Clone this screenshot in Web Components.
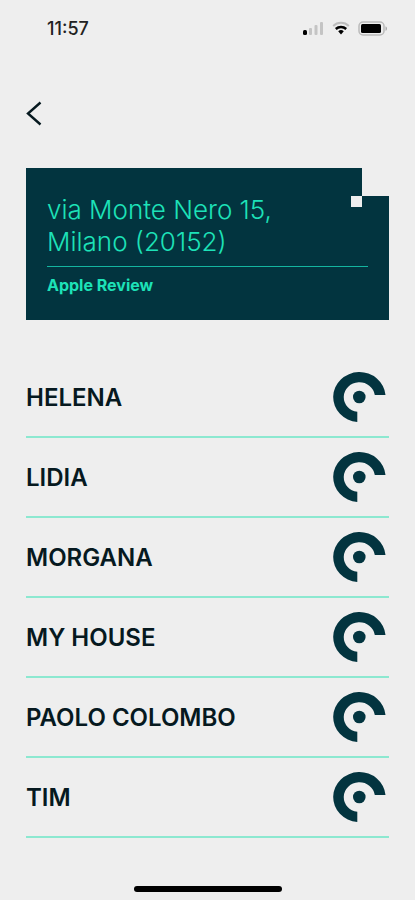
<!DOCTYPE html>
<html lang="it">
<head>
<meta charset="UTF-8">
<meta name="viewport" content="width=device-width, initial-scale=1">
<title>Apple Review</title>
<style>
    :root {
        --background: #eeeeee;
        --primary_color: #02343f;
        --secondary_color: #1de2b8;
        --line_color: #8ce8d0;
        --text_color: #06191f;
    }

    body {
        margin: 0;
        background-color: var(--background);
        color: var(--text_color);
        font-family: Inter, "Liberation Sans", sans-serif;
    }
</style>
</head>
<body>
<home-screen>
    <status-bar slot="status">11:57</status-bar>
    <back-button slot="nav"></back-button>
    <address-card slot="card">
        <span slot="address">via Monte Nero 15,<br>Milano (20152)</span>
        <span slot="owner">Apple Review</span>
    </address-card>
    <device-row>HELENA</device-row>
    <device-row>LIDIA</device-row>
    <device-row>MORGANA</device-row>
    <device-row>MY HOUSE</device-row>
    <device-row>PAOLO COLOMBO</device-row>
    <device-row>TIM</device-row>
</home-screen>

<script>
class HomeScreen extends HTMLElement {
    constructor() {
        super();
        this.shadow = this.attachShadow({ mode: 'open' });
    }

    connectedCallback() {
        this.shadow.innerHTML =
        /*html*/`
        <style>
            :host {
                display: flex;
                flex-direction: column;
                min-height: 100vh;
            }

            main {
                flex: 1;
                display: flex;
                flex-direction: column;
                padding: 40px 26px 0;
            }

            .list {
                margin-top: 38px;
            }

            .indicator {
                align-self: center;
                width: 148px;
                height: 6px;
                margin: 16px 0 8px;
                border-radius: 3px;
                background-color: #000;
            }
        </style>

        <slot name="status"></slot>
        <main>
            <slot name="nav"></slot>
            <slot name="card"></slot>
            <section class="list"><slot></slot></section>
        </main>
        <div class="indicator"></div>
        `;
    }
}
customElements.define('home-screen', HomeScreen);

class StatusBar extends HTMLElement {
    constructor() {
        super();
        this.shadow = this.attachShadow({ mode: 'open' });
    }

    connectedCallback() {
        this.shadow.innerHTML =
        /*html*/`
        <style>
            :host {
                display: flex;
                align-items: center;
                justify-content: space-between;
                height: 56px;
                padding: 0 27px 0 47px;
                color: #222;
                font-size: 18px;
                font-weight: 500;
            }

            .icons {
                display: flex;
                align-items: center;
                gap: 8px;
            }

            svg {
                display: block;
            }
        </style>

        <slot></slot>
        <div class="icons">
            <svg width="22" height="14" viewBox="0 0 22 14" aria-hidden="true">
                <rect x="1" y="9" width="4" height="5" rx="1.5" fill="#000"/>
                <rect x="7" y="7" width="3" height="7" rx="1" fill="#c4c4c4"/>
                <rect x="12.5" y="4" width="3" height="10" rx="1" fill="#c4c4c4"/>
                <rect x="18" y="1" width="3" height="13" rx="1" fill="#c4c4c4"/>
            </svg>
            <svg width="18" height="14" viewBox="0 0 18 14" fill="none" aria-hidden="true">
                <path d="M1.2 5a11.2 11.2 0 0 1 15.6 0" stroke="#bdbdbd" stroke-width="2"/>
                <path d="M3.8 8a7.6 7.6 0 0 1 10.4 0" stroke="#000" stroke-width="2.4"/>
                <path d="M6.2 10.3a4.2 4.2 0 0 1 5.6 0L9 13.4z" fill="#000"/>
            </svg>
            <svg width="30" height="15" viewBox="0 0 30 15" fill="none" aria-hidden="true">
                <rect x="1" y="1" width="25" height="13" rx="4" stroke="#bababa" stroke-width="1.5"/>
                <rect x="3" y="3" width="20" height="9" rx="1.5" fill="#000"/>
                <path d="M27.5 5.2c2 .8 2 3.8 0 4.6z" fill="#aaa"/>
            </svg>
        </div>
        `;
    }
}
customElements.define('status-bar', StatusBar);

class BackButton extends HTMLElement {
    constructor() {
        super();
        this.shadow = this.attachShadow({ mode: 'open' });
    }

    connectedCallback() {
        this.shadow.innerHTML =
        /*html*/`
        <style>
            :host {
                display: block;
            }

            button {
                display: block;
                padding: 4px 0;
                border: none;
                background: none;
                color: inherit;
                cursor: pointer;
            }

            svg {
                display: block;
            }
        </style>

        <button type="button" aria-label="Indietro">
            <svg width="16" height="26" viewBox="0 0 16 26" fill="none" stroke="currentColor" stroke-width="2.4">
                <path d="M14.5 2.5L2 13.5L14.5 24.500"/>
            </svg>
        </button>
        `;
    }
}
customElements.define('back-button', BackButton);

class AddressCard extends HTMLElement {
    constructor() {
        super();
        this.shadow = this.attachShadow({ mode: 'open' });
    }

    connectedCallback() {
        this.shadow.innerHTML =
        /*html*/`
        <style>
            :host {
                display: block;
                margin-top: 38px;
                color: var(--secondary_color);
            }

            /* the top right corner is cut out, with a small square hole inside it */
            .card {
                padding: 26px 21px 25px;
                background-color: var(--primary_color);
                clip-path: polygon(
                    0 0, calc(100% - 27px) 0, calc(100% - 27px) 28px,
                    calc(100% - 38px) 28px, calc(100% - 38px) 39px,
                    calc(100% - 27px) 39px, calc(100% - 27px) 28px,
                    100% 28px, 100% 100%, 0 100%
                );
            }

            h1 {
                margin: 0;
                padding-bottom: 8px;
                border-bottom: 1px solid #14b5a0;
                font-size: 26px;
                font-weight: 300;
                line-height: 32px;
            }

            p {
                margin: 8px 0 0;
                font-size: 16px;
                font-weight: 700;
                line-height: 20px;
            }
        </style>

        <section class="card">
            <h1><slot name="address"></slot></h1>
            <p><slot name="owner"></slot></p>
        </section>
        `;
    }
}
customElements.define('address-card', AddressCard);

class DeviceRow extends HTMLElement {
    constructor() {
        super();
        this.shadow = this.attachShadow({ mode: 'open' });
    }

    connectedCallback() {
        this.shadow.innerHTML =
        /*html*/`
        <style>
            :host {
                display: block;
                border-bottom: 2px solid var(--line_color);
            }

            button {
                display: flex;
                align-items: center;
                justify-content: space-between;
                width: 100%;
                height: 78px;
                padding: 0 3px 0 0;
                border: none;
                background: none;
                color: inherit;
                font: inherit;
                font-size: 24px;
                font-weight: 600;
                text-align: left;
                cursor: pointer;
            }

            svg {
                display: block;
                color: var(--primary_color);
            }
        </style>

        <button type="button">
            <slot></slot>
            <svg width="53" height="50" viewBox="0 0 53 50" fill="currentColor" aria-hidden="true">
                <path d="M24.3 50A26.2 25 0 1 1 52.500 23H41.800A15.600 14.800 0 1 0 24.300 39.800Z"/>
                <circle cx="26.3" cy="25" r="6.3"/>
            </svg>
        </button>
        `;
    }
}
customElements.define('device-row', DeviceRow);
</script>
</body>
</html>
